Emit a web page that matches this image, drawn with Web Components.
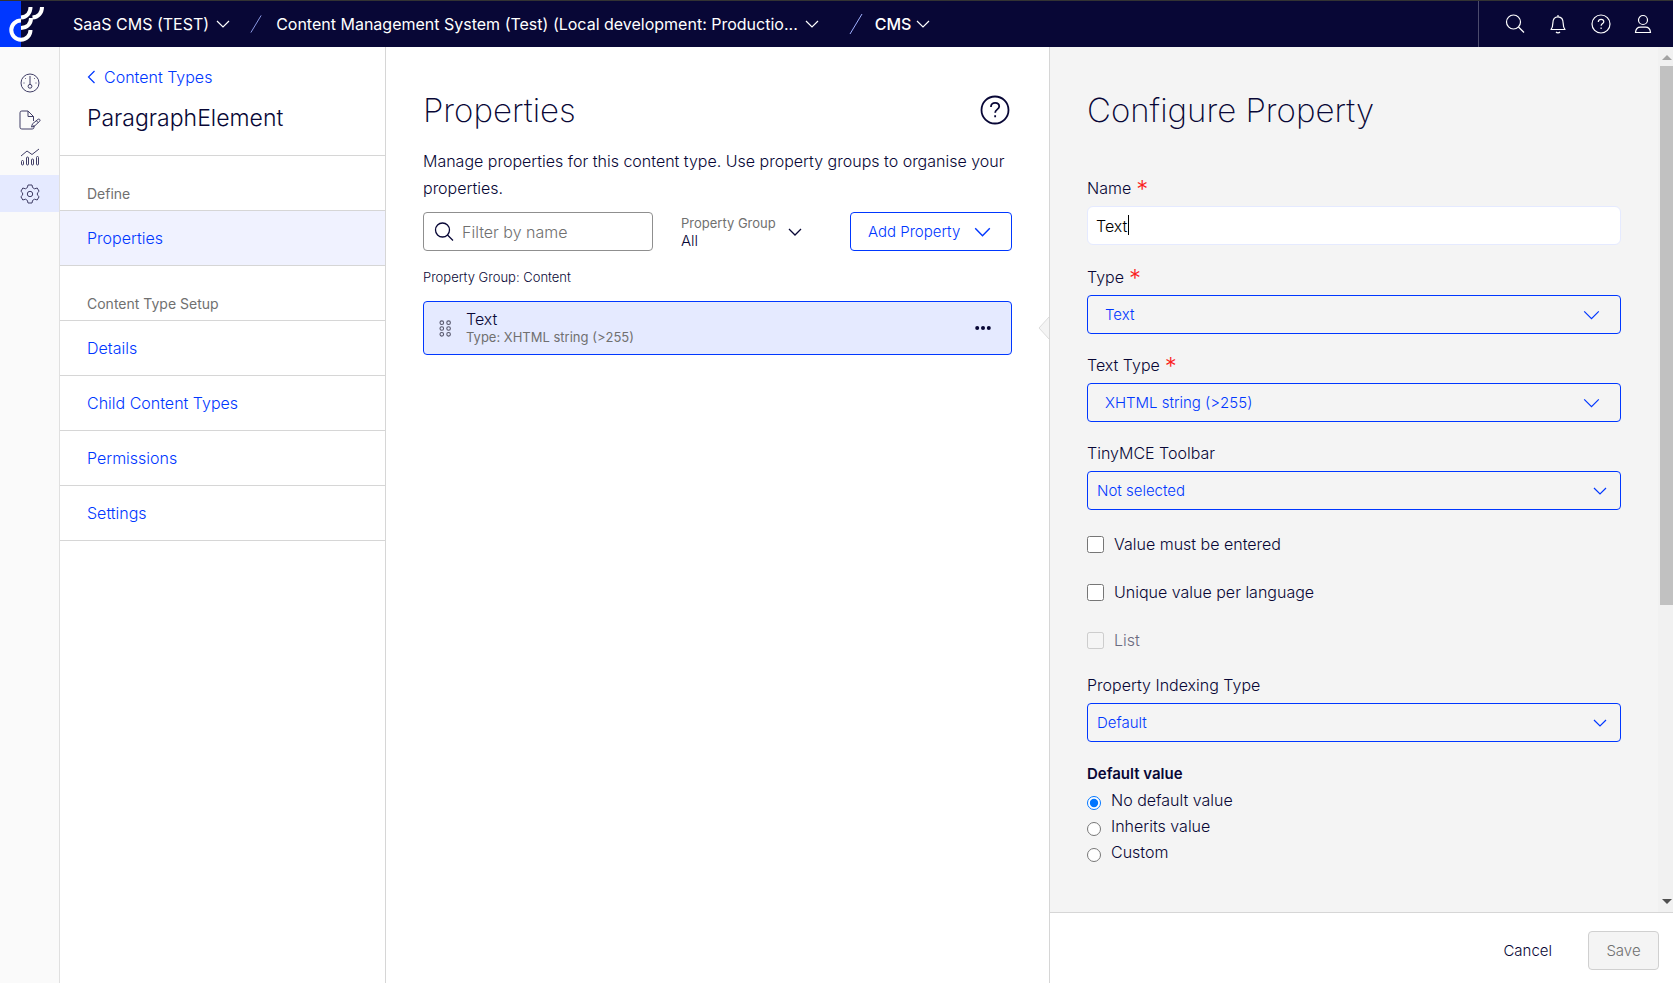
<!DOCTYPE html>
<html lang="en">
<head>
<meta charset="utf-8">
<title>Properties - CMS</title>
<meta name="viewport" content="width=device-width, initial-scale=1">
<style>
  :root {
    --navy: #080736;
    --blue: #0037ff;
    --line: #d6d6d6;
    --grey: #707070;
  }
  html, body { height: 100%; }
  body {
    margin: 0;
    font: 300 16px/24px Inter, "Open Sans", sans-serif;
    color: var(--navy);
    background: #fff;
  }
</style>
</head>
<body>
<cms-shell>
  <cms-topbar slot="top"></cms-topbar>
  <cms-rail slot="rail"></cms-rail>
  <cms-sidebar slot="side" heading="ParagraphElement">
    <cms-nav-group label="Define">
      <cms-nav-item active>Properties</cms-nav-item>
    </cms-nav-group>
    <cms-nav-group label="Content Type Setup">
      <cms-nav-item>Details</cms-nav-item>
      <cms-nav-item>Child Content Types</cms-nav-item>
      <cms-nav-item>Permissions</cms-nav-item>
      <cms-nav-item>Settings</cms-nav-item>
    </cms-nav-group>
  </cms-sidebar>
  <cms-properties slot="main">
    <cms-property-card name="Text" type="XHTML string (&gt;255)"></cms-property-card>
  </cms-properties>
  <cms-config slot="panel">
    <cms-text-field label="Name" value="Text" required></cms-text-field>
    <cms-select label="Type" value="Text" required wide></cms-select>
    <cms-select label="Text Type" value="XHTML string (&gt;255)" required wide></cms-select>
    <cms-select label="TinyMCE Toolbar" value="Not selected"></cms-select>
    <cms-check>Value must be entered</cms-check>
    <cms-check>Unique value per language</cms-check>
    <cms-check disabled>List</cms-check>
    <cms-select label="Property Indexing Type" value="Default"></cms-select>
    <cms-radio-group label="Default value" options="No default value|Inherits value|Custom"></cms-radio-group>
  </cms-config>
</cms-shell>

<script>
const ICONS = {
  chevron: ['0 0 14 8', '<path d="M1 1l6 6 6-6"/>'],
  back: ['0 0 8 14', '<path d="M7 1L1 7l6 6"/>'],
  search: ['0 0 20 20', '<circle cx="8.5" cy="8" r="7"/><path d="M13.5 13l5.500 5.500"/>'],
  bell: ['0 0 20 20', '<path d="M10 1v1.500M2.500 15.500h15M3 15.500c1.500-2 1.800-3.500 1.800-6C4.800 5 6.800 2.800 10 2.800s5.200 2.200 5.200 6.700c0 2.500.3 4 1.800 6M8 18c1 1.200 3 1.200 4 0"/>'],
  help: ['0 0 20 20', '<circle cx="10" cy="10" r="9"/><path d="M7.300 8c0-1.800 1.200-2.700 2.800-2.700S12.800 6.300 12.800 7.700c0 1.900-2.700 1.900-2.700 4.100M10.100 13.500v1.400"/>'],
  user: ['0 0 18 20', '<circle cx="9" cy="6" r="4.500"/><path d="M1.500 18.500c.3-3.700 2.500-5.300 5-5.300h5c2.500 0 4.700 1.600 5 5.300z"/>'],
  gauge: ['0 0 20 20', '<circle cx="10" cy="10" r="9"/><path d="M10 3v8.500M3.500 10h1M15.500 10h1M5.300 5.300l.7.7M14.700 5.300l-.7.700"/><circle cx="10" cy="13.300" r="1.900"/>'],
  edit: ['0 0 22 20', '<path d="M15 15v2.200A1.800 1.800 0 0 1 13.200 19H2.800A1.800 1.800 0 0 1 1 17.200V2.800A1.800 1.800 0 0 1 2.800 1H9l5.500 5.500V11M9 1v5.500h5.500M12.500 17l1-3.200 5.700-4.600c1.200-.6 2.500.8 1.600 1.900l-5.400 5.100zM17.500 10.800l1.700 1.900"/>'],
  chart: ['0 0 20 18', '<path d="M1 8l6-5 5 3.500L19 1"/><rect x="1.500" y="12.500" width="2" height="4.500" rx="1"/><rect x="6.500" y="9" width="2" height="8" rx="1"/><rect x="11.500" y="11" width="2" height="6" rx="1"/><rect x="16.500" y="8.500" width="2" height="8.500" rx="1"/>'],
  gear: ['0 0 20 20', '<path d="M8 1h4l.6 2.600 2 1.200L17.200 4l1.900 3.300-1.700 1.600v2.200l1.700 1.600-1.900 3.300-2.600-.8-2 1.200L12 19H8l-.6-2.600-2-1.200-2.600.8-1.900-3.300 1.700-1.600V8.900L.9 7.300 2.800 4l2.600.8 2-1.200z"/><circle cx="10" cy="10" r="2.700"/>'],
  grip: ['0 0 12 16', '<circle cx="2.500" cy="2.500" r="1.700"/><circle cx="8.900" cy="2.500" r="1.700"/><circle cx="2.500" cy="8" r="1.700"/><circle cx="8.900" cy="8" r="1.700"/><circle cx="2.500" cy="13.500" r="1.700"/><circle cx="8.900" cy="13.500" r="1.700"/>'],
  more: ['0 0 16 4', '<g fill="currentColor" stroke="none"><circle cx="2.200" cy="2" r="2"/><circle cx="8" cy="2" r="2"/><circle cx="13.800" cy="2" r="2"/></g>'],
  slash: ['0 0 14 22', '<path d="M1 21L13 1"/>']
};
const icon = (name, w, h, stroke = 1) => {
  const [box, body] = ICONS[name];
  return `<svg aria-hidden="true" width="${w}" height="${h}" viewBox="${box}" fill="none" stroke="currentColor" stroke-width="${stroke}">${body}</svg>`;
};
const BASE = `
  *, *::before, *::after { box-sizing: border-box; }
  svg { display: block; flex: none; }
  button, input, select { font: inherit; color: inherit; margin: 0; }
  button { background: none; border: 0; padding: 0; cursor: pointer; }
  h1, h2, p { margin: 0; }
  a { color: inherit; text-decoration: none; }
`;
const define = (name, render) => customElements.define(name, class extends HTMLElement {
  constructor() {
    super();
    const [css, html] = render(this);
    const tpl = document.createElement('template');
    tpl.innerHTML = `<style>${BASE}${css}</style>${html}`;
    this.attachShadow({ mode: 'open' }).append(tpl.content.cloneNode(true));
  }
});

define('cms-shell', () => [`
  :host { display: grid; height: 100vh; grid-template: auto minmax(0, 1fr) / 60px 326px minmax(0, 1fr) minmax(0, 624px); }
  slot[name=top] { display: block; grid-column: 1 / -1; }
  slot { display: grid; min-height: 0; }
`, `<slot name="top"></slot><slot name="rail"></slot><slot name="side"></slot><slot name="main"></slot><slot name="panel"></slot>`]);

define('cms-topbar', () => [`
  :host { display: block; }
  header { display: flex; align-items: center; height: 47px; background: var(--navy); border-top: 1px solid #333; color: #fff; font-weight: 400; }
  .logo { flex: none; height: 46px; margin-right: 27px; }
  nav { display: flex; align-items: center; flex: 1; min-width: 0; }
  button { display: flex; align-items: center; gap: 7px; white-space: nowrap; }
  .cms { font-weight: 500; gap: 5px; }
  .sep { color: #9fb0ff; margin: 0 14px 0 20px; }
  .sep.big { margin: 0 12px 0 30px; }
  .tools { display: flex; align-items: center; align-self: stretch; gap: 23px; padding: 0 21px 0 26px; border-left: 1px solid #4b4a6c; }
`, `<header>
  <a class="logo" href="#" aria-label="Home"><svg width="46" height="46" viewBox="0 0 46 46"><path fill="#0037ff" d="M0 0h21v46H0z"/><g fill="none" stroke="#fff" stroke-width="4"><path d="M30.500 6c0 6-4 10-9.500 10.500"/><path d="M42 6c0 6-4 10-9.500 10.500"/><path d="M31 17c0 6-4 9.700-10 10"/><path d="M21 19.500a9.600 9.600 0 1 0 9.500 9.500"/></g></svg></a>
  <nav aria-label="Context">
    <button>SaaS CMS (TEST)${icon('chevron', 14, 8, 1.2)}</button>
    <span class="sep">${icon('slash', 12, 20)}</span>
    <button>Content Management System (Test) (Local development: Productio...${icon('chevron', 14, 8, 1.2)}</button>
    <span class="sep big">${icon('slash', 14, 24)}</span>
    <button class="cms">CMS${icon('chevron', 14, 8, 1.2)}</button>
  </nav>
  <div class="tools">
    <button aria-label="Search">${icon('search', 20, 20, 1.2)}</button>
    <button aria-label="Notifications">${icon('bell', 20, 20, 1.2)}</button>
    <button aria-label="Help">${icon('help', 20, 20, 1.2)}</button>
    <button aria-label="Account">${icon('user', 18, 20, 1.2)}</button>
  </div></header>`]);

define('cms-rail', () => [`
  :host { display: block; background: #fafafa; border-right: 1px solid #e0e0e0; color: #403e66; }
  nav { display: grid; padding-top: 17px; grid-auto-rows: 37px; }
  a { display: grid; place-items: center; }
  .on { background: #e5eaff; }
`, `<nav aria-label="Sections">
  <a href="#" aria-label="Dashboard">${icon('gauge', 20, 20)}</a>
  <a href="#" aria-label="Edit">${icon('edit', 22, 20)}</a>
  <a href="#" aria-label="Reports">${icon('chart', 20, 18)}</a>
  <a href="#" aria-label="Settings" class="on">${icon('gear', 20, 20)}</a></nav>`]);

define('cms-sidebar', el => [`
  :host { display: block; border-right: 1px solid var(--line); }
  header { display: flex; flex-direction: column; align-items: flex-start; gap: 13px; padding: 18px 27px 21px; border-bottom: 1px solid var(--line); }
  a { display: flex; align-items: center; gap: 8px; color: var(--blue); }
  h2 { font-size: 23px; line-height: 32px; font-weight: 300; }
`, `<header><a href="#">${icon('back', 9, 14, 1.2)}Content Types</a><h2>${el.getAttribute('heading')}</h2></header><slot></slot>`]);

define('cms-nav-group', el => [`
  :host { display: block; }
  p { padding: 28px 27px 6px; font-size: 14px; line-height: 20px; font-weight: 400; color: var(--grey); border-bottom: 1px solid var(--line); }
`, `<p>${el.getAttribute('label')}</p><slot></slot>`]);

define('cms-nav-item', () => [`
  :host { display: block; border-bottom: 1px solid var(--line); color: var(--blue); }
  :host([active]) { background: #f0f2ff; }
  a { display: block; padding: 15px 27px; }
`, `<a href="#"><slot></slot></a>`]);

define('cms-properties', () => [`
  :host { display: block; padding: 41px 37px 24px; position: relative; }
  header { display: flex; justify-content: space-between; align-items: center; padding-right: 2px; }
  h1 { font-size: 33px; line-height: 44px; font-weight: 200; }
  .intro { margin-top: 16px; line-height: 27px; }
  .tools { display: flex; align-items: center; margin-top: 10px; }
  .filter { display: flex; align-items: center; gap: 8px; flex: 0 1 230px; min-width: 0; height: 39px; padding: 0 10px; border: 1px solid #8f8f8f; border-radius: 4px; }
  .filter input { border: 0; outline: 0; padding: 0; min-width: 0; width: 100%; background: none; }
  .filter input::placeholder { color: var(--grey); opacity: 1; }
  .group { display: grid; grid-template-columns: auto auto; align-items: center; column-gap: 12px; margin-left: 28px; }
  .group label { font-size: 13px; line-height: 18px; color: var(--grey); font-weight: 400; }
  .group select { grid-row: 2; appearance: none; border: 0; background: none; padding: 0; width: 40px; font-size: 15px; line-height: 18px; }
  .group svg { grid-area: 1 / 2 / 3; }
  .add { display: flex; align-items: center; justify-content: space-between; width: 162px; height: 39px; margin-left: auto; padding: 0 20px 0 17px; border: 1px solid var(--blue); border-radius: 4px; color: var(--blue); font-size: 15px; }
  .caption { margin: 16px 0 14px; font-size: 13px; line-height: 20px; }
  .notch { position: absolute; right: 0; top: 269px; color: #dcdcdc; }
`, `<header><h1>Properties</h1><button aria-label="Help">${icon('help', 30, 30, 1.2)}</button></header>
  <p class="intro">Manage properties for this content type. Use property groups to organise your properties.</p>
  <div class="tools">
    <div class="filter">${icon('search', 20, 20, 1.3)}<input type="text" placeholder="Filter by name" aria-label="Filter by name"></div>
    <div class="group"><label for="g">Property Group</label><select id="g"><option>All</option></select>${icon('chevron', 14, 8, 1.3)}</div>
    <button class="add">Add Property${icon('chevron', 17, 10, 1.2)}</button>
  </div>
  <p class="caption">Property Group: Content</p>
  <slot></slot>
  <svg class="notch" width="11" height="24" viewBox="0 0 11 24"><path d="M11 1L1 12l10 11" fill="#f4f4f4" stroke="currentColor"/></svg>`]);

define('cms-property-card', el => [`
  :host { display: flex; align-items: center; height: 54px; padding: 0 20px 0 15px; gap: 14px; background: #e5eaff; border: 1px solid var(--blue); border-radius: 4px; box-sizing: border-box; }
  .grip { color: #55556a; }
  .body { flex: 1; min-width: 0; line-height: 18px; }
  small { display: block; font-size: 13px; line-height: 18px; color: var(--grey); font-weight: 400; }
`, `<span class="grip">${icon('grip', 13, 17)}</span>
  <div class="body">${el.getAttribute('name')}<small>Type: ${el.getAttribute('type')}</small></div>
  <button aria-label="More actions">${icon('more', 16, 4)}</button>`]);

define('cms-config', () => [`
  :host { display: grid; grid-template: minmax(0, 1fr) auto / minmax(0, 1fr) 15px; border-left: 1px solid var(--line); background: #f4f4f4; min-height: 0; }
  .scroll { overflow: auto; scrollbar-width: none; padding: 41px 37px 40px; }
  h1 { font-size: 33px; line-height: 44px; font-weight: 200; margin-bottom: 44px; }
  .bar { display: flex; flex-direction: column; justify-content: space-between; background: #f1f1f1; padding: 8px 0; }
  .bar svg { margin-left: 4px; }
  .thumb { flex: 0 0 63.5%; margin: 6px 0 auto 2px; background: #c1c1c1; }
  footer { grid-column: 1 / -1; display: flex; justify-content: flex-end; align-items: center; gap: 36px; padding: 18px 14px 13px; background: #fff; border-top: 1px solid var(--line); font-size: 15px; }
  footer button { height: 39px; }
  .save { width: 71px; border: 1px solid #d0d0d0; border-radius: 4px; background: #f4f4f4; color: var(--grey); }
`, `<div class="scroll"><h1>Configure Property</h1><slot></slot></div>
  <div class="bar"><svg width="10" height="5" viewBox="0 0 10 5"><path fill="#a3a3a3" d="M5 0l5 5H0z"/></svg><div class="thumb"></div><svg width="10" height="5" viewBox="0 0 10 5"><path fill="#505050" d="M0 0h10L5 5z"/></svg></div>
  <footer><button>Cancel</button><button class="save" disabled>Save</button></footer>`]);

const FIELD = `
  :host { display: block; margin-bottom: 19px; }
  label { display: block; line-height: 24px; }
  sup { color: #fa1e1e; font-size: 24px; line-height: 0; vertical-align: -4px; margin-left: 5px; }
  .box { position: relative; margin-top: 6px; }
`;
const star = el => el.hasAttribute('required') ? '<sup>*</sup>' : '';

define('cms-text-field', el => [FIELD + `
  :host { margin-bottom: 20px; }
  input { display: block; width: 100%; height: 39px; padding: 0 8px; border: 1px solid #e5eaff; border-radius: 6px; background: #fff; outline: 0; color: #000; }
  .caret { position: absolute; left: 41px; top: 9px; width: 1px; height: 20px; background: #000; }
`, `<label for="f">${el.getAttribute('label')}${star(el)}</label><div class="box"><input id="f" type="text" value="${el.getAttribute('value')}"><span class="caret"></span></div>`]);

define('cms-select', el => [FIELD + `
  select { display: block; appearance: none; width: 100%; height: 39px; padding: 0 9px; border: 1px solid var(--blue); border-radius: 4px; background: none; color: var(--blue); font-size: 15px; }
  .box { display: grid; align-items: center; color: var(--blue); }
  select, svg { grid-area: 1 / 1; }
  svg { justify-self: end; margin-right: 14px; pointer-events: none; }
  :host([wide]) select { padding: 0 17px; }
  :host([wide]) svg { margin-right: 21px; }
`, `<label for="f">${el.getAttribute('label')}${star(el)}</label><div class="box"><select id="f"><option>${el.getAttribute('value').replace('>', '&gt;')}</option></select>${el.hasAttribute('wide') ? icon('chevron', 17, 10) : icon('chevron', 14, 8, 1.2)}</div>`]);

define('cms-check', el => [`
  :host { display: block; margin: 18px 0; }
  label { display: flex; align-items: center; gap: 10px; line-height: 30px; }
  input { width: 17px; height: 17px; }
  :host([disabled]) { color: #6b6b80; }
`, `<label><input type="checkbox" ${el.hasAttribute('disabled') ? 'disabled' : ''}><span><slot></slot></span></label>`]);

define('cms-radio-group', el => [`
  :host { display: block; }
  fieldset { border: 0; margin: 0; padding: 0; }
  legend { padding: 0; font-size: 15px; font-weight: 600; line-height: 26px; }
  label { display: flex; align-items: center; gap: 10px; line-height: 26px; }
  input { width: 14px; height: 14px; margin-top: 5px; accent-color: #0075ff; }
`, `<fieldset><legend>${el.getAttribute('label')}</legend>${el.getAttribute('options').split('|').map((o, i) => `<label><input type="radio" name="default" ${i ? '' : 'checked'}>${o}</label>`).join('')}</fieldset>`]);
</script>
</body>
</html>
